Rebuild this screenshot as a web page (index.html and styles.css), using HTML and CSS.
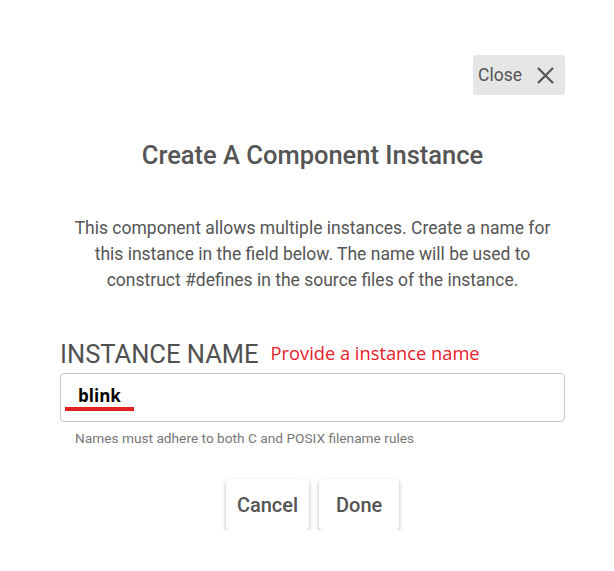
FILE: index.html
```html
<!DOCTYPE html>
<html lang="en">

<head>
    <meta charset="UTF-8">
    <title>Create A Component Instance</title>
    <link rel="stylesheet" href="styles.css">
</head>

<body>
    <div class="dialog">
        <div class="top">
            <button class="close">Close
                <svg width="17" height="17" viewBox="0 0 17 17">
                    <path d="M1 1 16 16M16 1 1 16" stroke="#555" stroke-width="2.2"/>
                </svg>
            </button>
        </div>
        <h2 class="title">Create A Component Instance</h2>
        <p class="desc">
            This component allows multiple instances. Create a name for
            this instance in the field below. The name will be used to
            construct #defines in the source files of the instance.
        </p>
        <div class="field">
            <div class="label">
                <span class="name">INSTANCE NAME</span>
                <span class="warn">Provide a instance name</span>
            </div>
            <div class="input">
                <span class="value">blink</span>
                <span class="mark"></span>
            </div>
            <div class="hint">Names must adhere to both C and POSIX filename rules</div>
        </div>
        <div class="actions">
            <button class="btn">Cancel</button>
            <button class="btn">Done</button>
        </div>
    </div>
</body>

</html>
```

FILE: styles.css
```css
body {
    margin: 0;
    background: #fff;
    font-family: Roboto, "Liberation Sans", sans-serif;
    color: #555;
}

.dialog {
    width: 505px;
    padding: 55px 49px 0 60px;
}

.top {
    display: flex;
    justify-content: flex-end;
}

.close {
    display: flex;
    align-items: center;
    gap: 15px;
    height: 40px;
    width: 92px;
    padding: 0 0 0 5px;
    border: none;
    border-radius: 3px;
    background: #e6e6e6;
    font-family: Roboto, sans-serif;
    font-size: 17.5px;
    color: #555;
}

.title {
    margin: 44px 0 0;
    text-align: center;
    font-size: 25.5px;
    font-weight: 500;
    line-height: 32px;
}

.desc {
    margin: 44px 0 0;
    padding: 0 12px;
    text-align: center;
    font-size: 17.5px;
    line-height: 26px;
}

.field {
    margin-top: 46px;
}

.label {
    display: flex;
    align-items: center;
    gap: 12px;
}

.name {
    font-size: 25.5px;
    line-height: 30px;
    color: #505050;
}

.warn {
    font-family: "Open Sans", sans-serif;
    font-size: 18.3px;
    line-height: 24px;
    color: #e8202a;
    margin-top: -3px;
}

.input {
    position: relative;
    height: 47px;
    margin-top: 4px;
    border: 1px solid #c8c8c8;
    border-radius: 4px;
    padding: 0 0 0 17px;
    display: flex;
    align-items: center;
}

.value {
    font-family: "Open Sans", sans-serif;
    font-weight: 700;
    font-size: 17px;
    color: #000;
    margin-top: -4px;
}

.mark {
    position: absolute;
    left: 4px;
    top: 33px;
    width: 69px;
    height: 4px;
    background: #e02020;
}

.hint {
    margin: 8px 0 0 15px;
    font-size: 13.7px;
    color: #777;
}

.actions {
    display: flex;
    justify-content: center;
    gap: 10px;
    margin-top: 33px;
}

.btn {
    min-width: 80px;
    height: 51px;
    padding: 0 11px;
    border: none;
    border-radius: 4px;
    background: #fff;
    box-shadow: 0 2px 4px rgba(0, 0, 0, 0.3);
    font-family: Roboto, sans-serif;
    font-size: 20px;
    font-weight: 500;
    color: #555;
}
```
